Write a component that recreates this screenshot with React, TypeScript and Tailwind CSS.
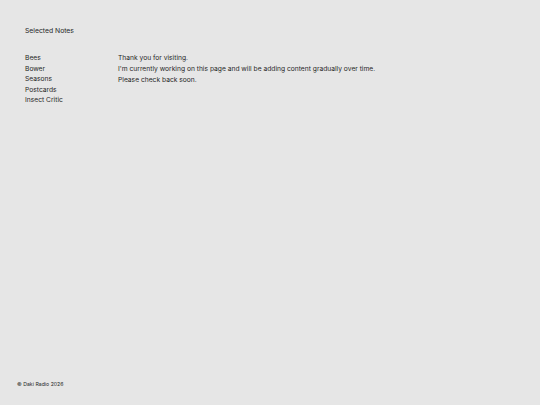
export default function App() {
  const links = ['Bees', 'Bower', 'Seasons', 'Postcards', 'Insect Critic']

  return (
    <div className="flex h-[405px] w-[540px] flex-col bg-[#e6e6e6] font-['Inter',sans-serif] text-[6.7px] leading-[10.4px] text-[#262626]">
      <header className="px-[25px] pt-[26px]">
        <h1 className="text-[6.8px] font-normal">Selected Notes</h1>
      </header>

      <div className="flex pt-[17px]">
        {/* Sidebar */}
        <nav className="flex w-[118px] flex-col pl-[25px]">
          {links.map((l) => (
            <a key={l} href="#" className="whitespace-nowrap">
              {l}
            </a>
          ))}
        </nav>

        {/* Content */}
        <main className="flex flex-col gap-[0.6px]">
          <p>Thank you for visiting.</p>
          <p>I'm currently working on this page and will be adding content gradually over time.</p>
          <p>Please check back soon.</p>
        </main>
      </div>

      <footer className="mt-auto pb-[17px] pl-[17px] text-[5.2px] leading-[8px]">© Daki Radio 2026</footer>
    </div>
  )
}
